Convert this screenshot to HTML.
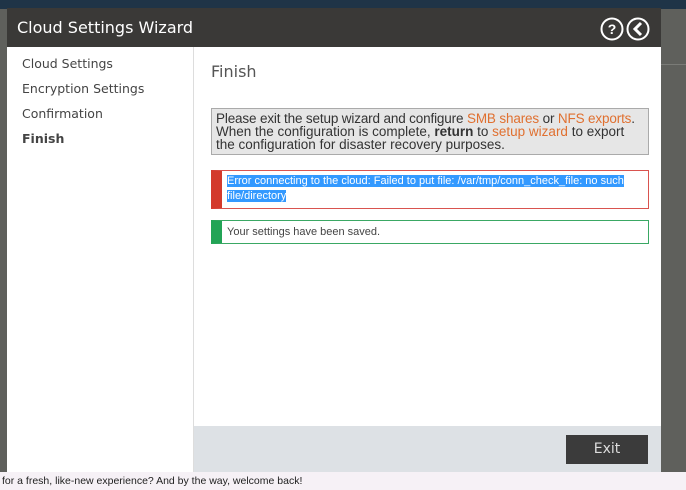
<!DOCTYPE html>
<html><head><style>
body{margin:0;width:686px;height:490px;position:relative;overflow:hidden;background:#5f605c;font-family:"DejaVu Sans","Liberation Sans",sans-serif}
.top{position:absolute;left:0;top:0;width:686px;height:9px;background:#1f3447}
.line{position:absolute;left:661px;top:64px;width:25px;height:1px;background:#7a7b77}
.dlg{position:absolute;left:7px;top:8px;width:654px;height:464px;background:#fff}
.hdr{height:39px;background:#3a3937;color:#fff;font-size:16px;line-height:39px;padding-left:10px}
.side{position:absolute;left:0;top:39px;width:186px;height:425px;border-right:1px solid #ddd}
.side div{font-size:12.5px;color:#444;position:absolute;left:15px}
.content{position:absolute;left:187px;top:39px;right:0;bottom:0}
.foot{position:absolute;left:0;right:0;bottom:0;height:46px;background:#dde1e5}
.exit{position:absolute;left:372px;top:9px;width:82px;height:29px;background:#3b3b3b;color:#ddd;font-size:14px;text-align:center;line-height:29px}
.info{position:absolute;left:17px;top:61px;background:#e6e6e6;border:1px solid #aaa;font-family:"Liberation Sans",sans-serif;font-size:13.5px;line-height:13px;color:#333;padding:3px 4px;box-sizing:border-box;width:438px;height:47px;white-space:nowrap;overflow:hidden}
.o{color:#e07030}
.msg{position:absolute;left:17px;width:438px;box-sizing:border-box;border:1px solid;font-family:"Liberation Sans",sans-serif;font-size:11px;color:#444}
.bottom{position:absolute;left:0;top:472px;width:686px;height:18px;background:#f6f1f6;font-family:"Liberation Sans",sans-serif;font-size:10.5px;color:#222;line-height:18px;padding-left:2px}
</style></head><body>
<div class="top"></div><div class="line"></div>
<div class="dlg">
<div class="hdr">Cloud Settings Wizard
<svg style="position:absolute;left:593px;top:9px" width="54" height="24"><circle cx="12" cy="12" r="10.5" fill="none" stroke="#fff" stroke-width="2"/><text x="12" y="17" fill="#fff" font-size="14" font-weight="bold" text-anchor="middle" font-family="Liberation Sans">?</text><circle cx="38" cy="12" r="10.5" fill="none" stroke="#fff" stroke-width="2"/><path d="M41 6 L35 12 L41 18" fill="none" stroke="#fff" stroke-width="3"/></svg></div>
<div class="side">
<div style="top:9px">Cloud Settings</div>
<div style="top:34px">Encryption Settings</div>
<div style="top:59px">Confirmation</div>
<div style="top:84px;font-weight:bold">Finish</div>
</div>
<div class="content">
<div style="position:absolute;left:17px;top:15px;font-size:16px;color:#555">Finish</div>
<div class="info"><span style="letter-spacing:-0.15px">Please exit the setup wizard and configure <span class="o">SMB shares</span> or <span class="o">NFS exports</span>.</span><br>When the configuration is complete, <b>return</b> to <span class="o">setup wizard</span> to export<br>the configuration for disaster recovery purposes.</div>
<div class="msg" style="top:123px;height:39px;border-color:#d9534f;border-left:11px solid #d33a2c"><div style="padding:3px 5px;line-height:15px"><span style="background:#3399ff;color:#fff">Error connecting to the cloud: Failed to put file: /var/tmp/conn_check_file: no such<br>file/directory</span></div></div>
<div class="msg" style="top:173px;height:24px;border-color:#3aa864;border-left:11px solid #22a456;line-height:22px;padding-left:5px">Your settings have been saved.</div>
<div class="foot"><div class="exit">Exit</div></div>
</div>
</div>
<div class="bottom">for a fresh, like-new experience? And by the way, welcome back!</div>
</body></html>
